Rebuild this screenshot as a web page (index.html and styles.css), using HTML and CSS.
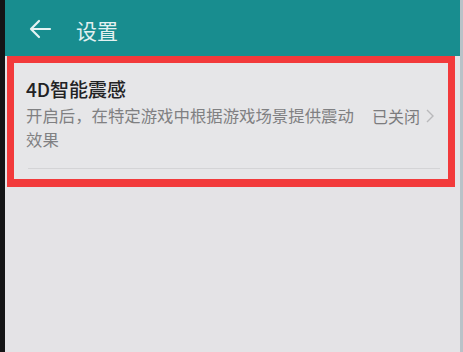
FILE: index.html
```html
<!DOCTYPE html>
<html lang="zh">
<head>
<meta charset="utf-8">
<link rel="stylesheet" href="styles.css">
</head>
<body>
<div class="screen">
  <div class="edge"></div>
  <div class="main">
    <header class="appbar">
      <svg class="back" width="24" height="20" viewBox="0 0 24 20">
        <path d="M22 10H3M11 2L3 10L11 18" fill="none" stroke="#e6f3f3" stroke-width="2.2" stroke-linecap="round" stroke-linejoin="round"/>
      </svg>
      <span class="title">设置</span>
    </header>
    <section class="highlight">
      <div class="row">
        <div class="texts">
          <div class="name">4D智能震感</div>
          <div class="desc">开启后，在特定游戏中根据游戏场景提供震动效果</div>
        </div>
        <div class="status">已关闭</div>
        <svg class="chev" width="8" height="14" viewBox="0 0 8 14">
          <path d="M1 1L7 7L1 13" fill="none" stroke="#b9b9bb" stroke-width="1.4"/>
        </svg>
      </div>
      <div class="divider"></div>
    </section>
  </div>
  <div class="edge-r"></div>
</div>
</body>
</html>
```
FILE: styles.css
```css
html, body {
  margin: 0;
  padding: 0;
  background: #e4e3e6;
}
.screen {
  width: 463px;
  height: 352px;
  display: flex;
  overflow: hidden;
  font-family: "Noto Sans CJK SC", "Noto Sans", sans-serif;
}
.edge {
  width: 5px;
  flex: none;
  background: #141416;
}
.edge-r {
  width: 3px;
  flex: none;
  background: #b9c2c8;
}
.main {
  flex: 1;
  display: flex;
  flex-direction: column;
  background: #e4e3e6;
}
.appbar {
  height: 56px;
  flex: none;
  background: #188d8f;
  display: flex;
  align-items: center;
  padding-left: 23px;
  box-sizing: border-box;
}
.back {
  margin-top: 2px;
}
.title {
  margin-left: 24px;
  color: #e3f1f1;
  font-size: 21px;
  line-height: 24px;
  margin-top: 3px;
}
.highlight {
  margin-left: 2px;
  width: 448px;
  height: 131px;
  box-sizing: border-box;
  border: 7px solid #f23a3b;
  border-bottom-width: 8px;
  background: #e6e6e8;
  padding: 13px 0 0 12px;
  display: flex;
  flex-direction: column;
}
.row {
  display: flex;
  align-items: center;
}
.texts {
  width: 338px;
  flex: none;
}
.name {
  font-size: 19px;
  line-height: 26px;
  color: #222224;
  font-weight: 500;
}
.desc {
  font-size: 16.4px;
  line-height: 24px;
  color: #808082;
  margin-top: 1px;
}
.status {
  margin-left: 8px;
  font-size: 16px;
  color: #7c7c7e;
  white-space: nowrap;
  margin-top: 4px;
}
.chev {
  margin-left: 6px;
  margin-top: 4px;
}
.divider {
  margin-top: 17px;
  margin-left: 2px;
  width: 412px;
  height: 1px;
  background: #d4d4d6;
}
```
